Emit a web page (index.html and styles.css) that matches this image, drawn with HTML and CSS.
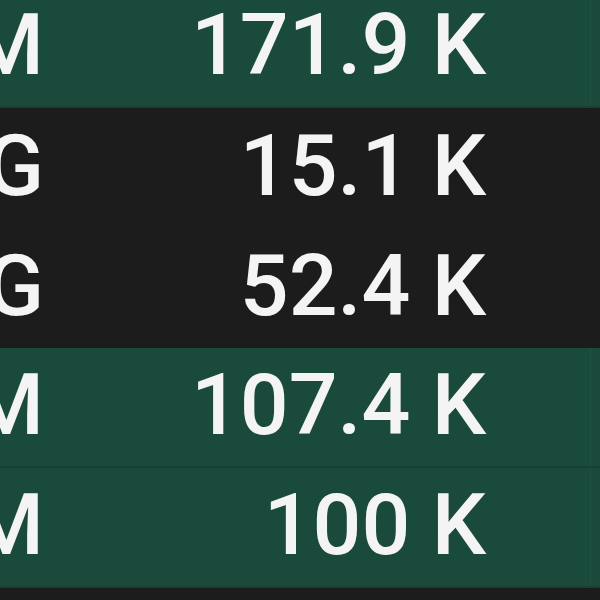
FILE: index.html
```html
<!DOCTYPE html>
<html lang="en">
<head>
<meta charset="UTF-8">
<title>Volumes</title>
<link rel="stylesheet" href="styles.css">
</head>
<body>

<div class="table">
<div class="row up">
<div class="cell name"><span>AM</span></div>
<div class="cell vol">171.9 K</div>
<div class="cell rest"></div>
</div>
<div class="row">
<div class="cell name"><span>NG</span></div>
<div class="cell vol">15.1 K</div>
<div class="cell rest"></div>
</div>
<div class="row">
<div class="cell name"><span>NG</span></div>
<div class="cell vol">52.4 K</div>
<div class="cell rest"></div>
</div>
<div class="row up">
<div class="cell name"><span>AM</span></div>
<div class="cell vol">107.4 K</div>
<div class="cell rest"></div>
</div>
<div class="row up">
<div class="cell name"><span>AM</span></div>
<div class="cell vol">100 K</div>
<div class="cell rest"></div>
</div>
</div>

</body>
</html>
```

FILE: styles.css
```css
* {
margin: 0;
padding: 0;
box-sizing: border-box;
}

body {
background: #1c1c1c;
color: #f4f4f4;
font-family: Roboto, "Noto Sans", sans-serif;
font-weight: 500;
overflow: hidden;
height: 600px;
}

.table {
margin-top: -12px;
display: flex;
flex-direction: column;
}

.row {
display: flex;
height: 120px;
background: #1c1c1c;
}

.row.up {
background: #1a4a3b;
border-bottom: 2px solid #17402f;
}

.cell {
display: flex;
align-items: center;
font-size: 86px;
white-space: nowrap;
padding-bottom: 6px;
}

/* first column is cut off on the left */
.name {
width: 44px;
justify-content: flex-end;
overflow: visible;
}

.vol {
width: 546px;
justify-content: flex-end;
padding-right: 104px;
}

.rest {
flex: 1;
border-left: 1px solid #1f5242;
}

.row:not(.up) .rest {
border-left-color: #1c1c1c;
}
```
